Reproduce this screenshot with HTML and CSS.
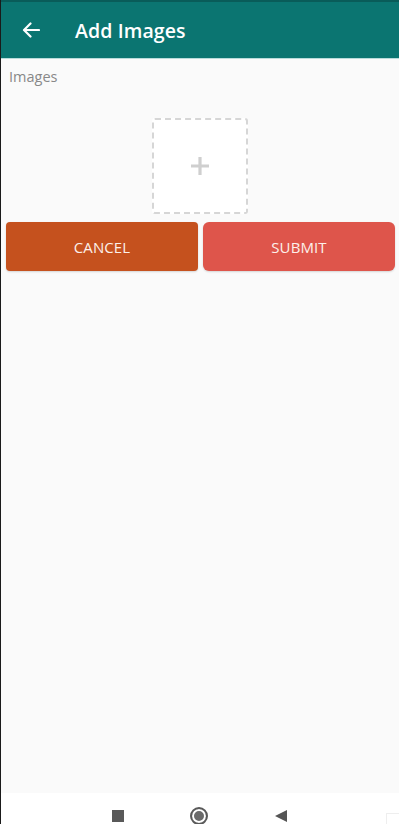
FILE: index.html
```html
<!DOCTYPE html>
<html lang="en">
<head>
<meta charset="UTF-8" />
<meta name="viewport" content="width=device-width, initial-scale=1" />
<title>Add Images</title>
<link rel="stylesheet" href="styles.css">
</head>
<body>

<div id="screen">
  <div class="status"></div>
  <div class="toolbar">
    <button class="back" aria-label="Back">
      <svg width="18" height="16" viewBox="0 0 18 16">
        <path d="M17 8H2.5M8.5 1.5L2 8l6.5 6.5" fill="none" stroke="#fff" stroke-width="2.2" stroke-linecap="round" stroke-linejoin="round"/>
      </svg>
    </button>
    <h1 class="title">Add Images</h1>
  </div>

  <div class="content">
    <div class="label">Images</div>
    <div class="picker">
      <div class="add-box">
        <svg width="22" height="22" viewBox="0 0 22 22">
          <path d="M11 2v18M2 11h18" stroke="#cfcfcf" stroke-width="3.2"/>
        </svg>
      </div>
    </div>
    <div class="actions">
      <button class="btn cancel">CANCEL</button>
      <button class="btn submit">SUBMIT</button>
    </div>
  </div>

  <div class="navbar">
    <span class="nav-square"></span>
    <span class="nav-circle"></span>
    <svg class="nav-back" width="14" height="14" viewBox="0 0 14 14">
      <path d="M13 1v12L1 7z" fill="#555"/>
    </svg>
    <span class="nav-corner"></span>
  </div>
</div>

</body>
</html>
```

FILE: styles.css
```css
/* Add images screen */
body {
  margin: 0;
  background: #fafafa;
  font-family: 'Open Sans', 'Noto Sans', sans-serif;
}
#screen {
  display: flex;
  flex-direction: column;
  height: 824px;
  border-left: 1px solid #1a1a1a;
  box-sizing: border-box;
}
.status {
  height: 2px;
  background: #095c59;
}
.toolbar {
  height: 56px;
  background: #0b7571;
  display: flex;
  align-items: center;
  border-bottom: 1px solid #b9dcdb;
}
.back {
  background: none;
  border: none;
  padding: 0;
  margin-left: 20px;
  width: 20px;
  height: 20px;
  display: flex;
  align-items: center;
  justify-content: center;
}
.title {
  margin: 0 0 0 34px;
  color: #fff;
  font-size: 19.5px;
  font-weight: 600;
  letter-spacing: 0.1px;
}
.content {
  flex: 1;
  padding: 0 4px 0 5px;
}
.label {
  margin: 8px 0 0 3px;
  font-size: 14.5px;
  color: #888;
  line-height: 20px;
}
.picker {
  display: flex;
  justify-content: center;
  margin-top: 31px;
  padding-right: 2px;
}
.add-box {
  width: 92px;
  height: 92px;
  border: 2px dashed #d6d6d6;
  border-radius: 3px;
  background: #fff;
  display: flex;
  align-items: center;
  justify-content: center;
}
.actions {
  display: flex;
  gap: 5px;
  margin-top: 8px;
}
.btn {
  flex: 1;
  height: 49px;
  border: none;
  color: #fcf0ea;
  font-family: 'Open Sans', 'Noto Sans', sans-serif;
  font-size: 15px;
  letter-spacing: 0.1px;
  box-shadow: 0 1px 2px rgba(0,0,0,0.15);
}
.cancel {
  background: #c5511e;
  border-radius: 4px;
}
.submit {
  background: #de554b;
  border-radius: 6px;
}
.navbar {
  height: 31px;
  background: #fff;
  display: flex;
  align-items: flex-end;
  justify-content: center;
  gap: 66px;
  padding-bottom: 2px;
  box-sizing: border-box;
  position: relative;
}
.nav-square {
  width: 12px;
  height: 12px;
  background: #595959;
}
.nav-circle {
  width: 14px;
  height: 14px;
  border: 2px solid #595959;
  border-radius: 50%;
  margin-bottom: -3px;
  box-shadow: inset 0 0 0 2px #fff, inset 0 0 0 7px #6a6a6a;
}
.nav-back {
  margin-bottom: -1px;
}
.nav-corner {
  position: absolute;
  right: 0;
  bottom: 0;
  width: 12px;
  height: 10px;
  border-top: 1px solid #eee;
  border-left: 1px solid #eee;
}
```
